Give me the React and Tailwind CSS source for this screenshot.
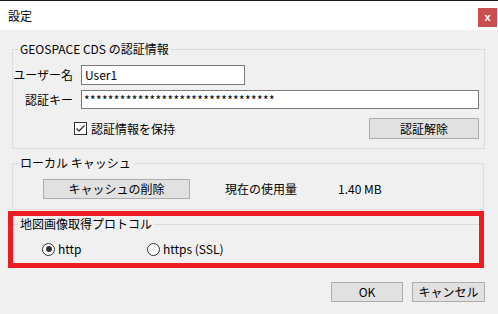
import React from 'react';

const font = 'font-["Noto_Sans_CJK_JP","Noto_Sans",sans-serif]';

function Button({ className = '', children }) {
    return (
        <button className={`flex items-center justify-center bg-[#e1e1e1] border border-[#adadad] text-[12px] leading-none text-black ${className}`}>
            {children}
        </button>
    );
}

function Group({ title, className = '', children }) {
    return (
        <fieldset className={`border border-[#dcdcdc] m-0 p-0 ${className}`}>
            <legend className="ml-[5px] px-[2px] leading-[16px] text-[12px]">{title}</legend>
            {children}
        </fieldset>
    );
}

function Radio({ checked, label }) {
    return (
        <label className="flex items-center w-[105px]">
            <span className="flex items-center justify-center w-[13px] h-[13px] rounded-full border border-[#333333] bg-white">
                {checked && <span className="w-[6px] h-[6px] rounded-full bg-[#333333]"></span>}
            </span>
            <span className="ml-[3px] leading-[16px]">{label}</span>
        </label>
    );
}

export default function App() {
    return (
        <div className={`w-[498px] h-[314px] bg-[#f0f0f0] overflow-hidden text-[12px] text-black ${font}`}>
            {/* Title bar */}
            <div className="h-[30px] bg-white border-t border-[#1a1a1a] flex items-start justify-between pl-[8px] pr-[1px]">
                <span className="self-center leading-[16px] text-[12px]">設定</span>
                <button className="mt-[7px] w-[19px] h-[19px] bg-[#c75050] text-white flex items-center justify-center text-[11px] font-bold leading-none font-['Liberation_Sans',sans-serif]">
                    x
                </button>
            </div>

            <div className="pl-[12px] pr-[14px] pt-[11px]">
                {/* Credentials */}
                <Group title="GEOSPACE CDS の認証情報">
                    <div className="pt-[8px] pb-[9px] pr-[5px]">
                        <div className="flex items-center h-[20px]">
                            <span className="w-[60px] text-right whitespace-nowrap">ユーザー名</span>
                            <div className="ml-[8px] w-[164px] h-[20px] border border-[#7a7a7a] bg-white px-[3px] flex items-center leading-none">
                                User1
                            </div>
                        </div>
                        <div className="flex items-center h-[19px] mt-[5px]">
                            <span className="w-[60px] text-right whitespace-nowrap">認証キー</span>
                            <div className="ml-[8px] w-[398px] h-[19px] border border-[#7a7a7a] bg-white px-[2px] flex items-center leading-none tracking-[0.36px] overflow-hidden whitespace-nowrap">
                                ********************************
                            </div>
                        </div>
                        <div className="flex items-center h-[21px] mt-[9px]">
                            <span className="ml-[61px] flex items-center justify-center w-[13px] h-[13px] border border-[#333333] bg-white">
                                <svg width="11" height="11" viewBox="0 0 11 11">
                                    <path d="M1.5 5.5 L4 8 L9.5 2.5" fill="none" stroke="#333333" strokeWidth="1.3" />
                                </svg>
                            </span>
                            <span className="ml-[4px]">認証情報を保持</span>
                            <Button className="ml-auto w-[110px] h-[21px]">認証解除</Button>
                        </div>
                    </div>
                </Group>

                {/* Local cache */}
                <Group title="ローカル キャッシュ" className="mt-[6px]">
                    <div className="pt-[8px] pb-[10px] flex items-center">
                        <Button className="ml-[30px] w-[147px] h-[20px]">キャッシュの削除</Button>
                        <span className="ml-[35px] w-[113px] whitespace-nowrap">現在の使用量</span>
                        <span>1.40 MB</span>
                    </div>
                </Group>

                {/* Protocol, highlighted */}
                <div className="relative mt-[6px]">
                    <Group title="地図画像取得プロトコル">
                        <div className="pt-[9px] pb-[9px] flex items-center h-[34px] pl-[29px]">
                            <Radio checked label="http" />
                            <Radio label="https (SSL)" />
                        </div>
                    </Group>
                    <div className="absolute left-[-4px] top-[-5px] right-0 bottom-[-1px] border-[5px] border-[#ed1c24] pointer-events-none"></div>
                </div>
            </div>

            {/* Dialog buttons */}
            <div className="flex justify-end gap-[9px] pr-[13px] mt-[15px]">
                <Button className="w-[72px] h-[20px]">OK</Button>
                <Button className="w-[73px] h-[20px]">キャンセル</Button>
            </div>
        </div>
    );
}
